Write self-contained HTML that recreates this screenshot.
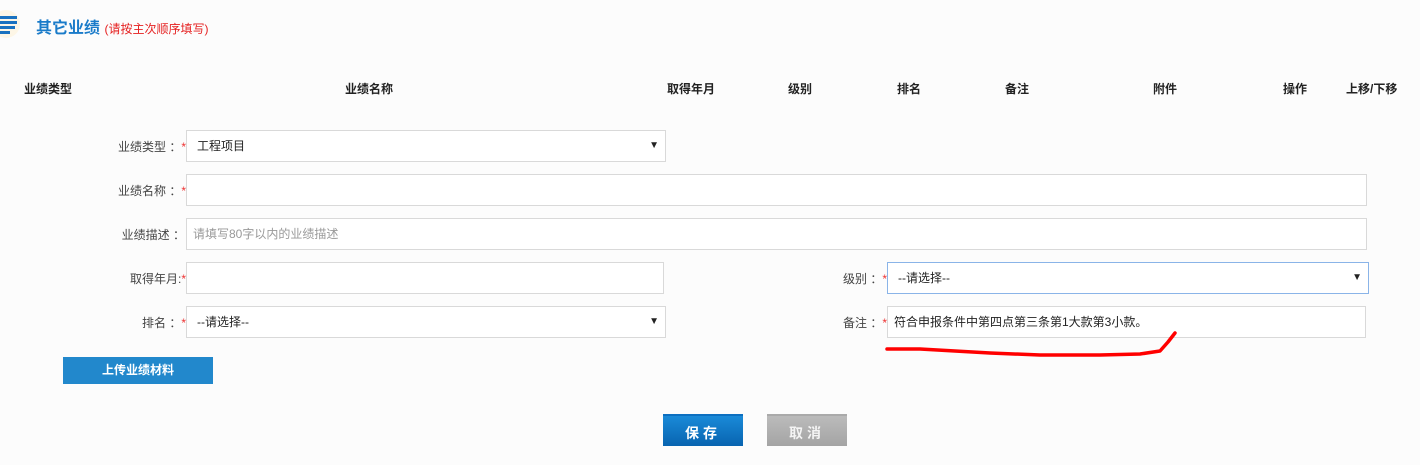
<!DOCTYPE html>
<html><head><meta charset="utf-8"><style>
body{margin:0;width:1420px;height:465px;background:#fcfcfc;font-family:"Liberation Sans","Noto Sans CJK SC",sans-serif;position:relative;overflow:hidden;font-size:12px;color:#333}
.a{position:absolute}
.th{position:absolute;top:80px;font-weight:bold;font-size:12px;color:#222}
.lb{position:absolute;width:180px;left:0;text-align:right;color:#444;font-size:12px}
.lb i{color:#e33;font-style:normal}
.in{position:absolute;background:#fff;border:1px solid #d9d9d9;box-sizing:border-box;height:32px;line-height:30px;padding-left:10px;font-size:12px;color:#222}
.in .ar{position:absolute;right:6px;top:0;font-size:10px}
.btn{position:absolute;color:#fff;text-align:center;font-weight:bold}
</style></head><body>
<svg class="a" style="left:0;top:5px" width="24" height="34"><circle cx="6" cy="19" r="14" fill="#fdf6e6"/><g fill="#1a72c0"><rect x="0" y="11" width="17" height="3"/><rect x="0" y="16" width="17" height="3"/><rect x="0" y="21" width="15" height="3"/><rect x="0" y="26" width="10" height="3"/></g></svg>
<div class="a" style="left:36px;top:14px;font-size:16px;font-weight:bold;color:#1a7bc9">其它业绩 <span style="font-size:12px;font-weight:normal;color:#e52020">(请按主次顺序填写)</span></div>
<div class="th" style="left:24px">业绩类型</div>
<div class="th" style="left:345px">业绩名称</div>
<div class="th" style="left:667px">取得年月</div>
<div class="th" style="left:788px">级别</div>
<div class="th" style="left:897px">排名</div>
<div class="th" style="left:1005px">备注</div>
<div class="th" style="left:1153px">附件</div>
<div class="th" style="left:1283px">操作</div>
<div class="th" style="left:1346px">上移/下移</div>

<div class="lb" style="top:138px;width:186px">业绩类型 ：<i>*</i></div>
<div class="in" style="left:186px;top:130px;width:480px">工程项目<span class="ar">▼</span></div>
<div class="lb" style="top:182px;width:186px">业绩名称 ：<i>*</i></div>
<div class="in" style="left:186px;top:174px;width:1181px"></div>
<div class="lb" style="top:226px;width:185px">业绩描述 ：</div>
<div class="in" style="left:186px;top:218px;width:1181px;color:#999;padding-left:6px">请填写80字以内的业绩描述</div>
<div class="lb" style="top:270px;width:186px">取得年月:<i>*</i></div>
<div class="in" style="left:186px;top:262px;width:478px"></div>
<div class="lb" style="top:314px;width:186px">排名 ：<i>*</i></div>
<div class="in" style="left:186px;top:306px;width:480px">--请选择--<span class="ar">▼</span></div>
<div class="lb" style="top:270px;left:700px;width:187px">级别 ：<i>*</i></div>
<div class="in" style="left:887px;top:262px;width:482px;border-color:#8ab4e8">--请选择--<span class="ar">▼</span></div>
<div class="lb" style="top:314px;left:700px;width:187px">备注 ：<i>*</i></div>
<div class="in" style="left:887px;top:306px;width:479px;padding-left:6px">符合申报条件中第四点第三条第1大款第3小款。</div>
<svg class="a" style="left:880px;top:328px" width="310" height="34"><path d="M7 21 L40 21 L75 23 L110 25 L160 27 L220 27 L260 26 L280 23 L288 14 L295 5" stroke="#f00" stroke-width="3.5" fill="none" stroke-linecap="round" stroke-linejoin="round"/></svg>

<div class="btn" style="left:63px;top:357px;width:150px;height:27px;line-height:27px;background:#2288cc;font-size:12px">上传业绩材料</div>
<div class="btn" style="left:663px;top:414px;width:80px;height:32px;line-height:34px;background:linear-gradient(#1a8ad8,#0864b0);border-top:2px solid #0c6fc0;box-sizing:border-box;font-size:14px;letter-spacing:4px">保存</div>
<div class="btn" style="left:767px;top:414px;width:80px;height:32px;line-height:34px;background:linear-gradient(#bbb,#a4a4a4);border-top:2px solid #aaa;box-sizing:border-box;font-size:14px;letter-spacing:4px;color:#f4f4f4">取消</div>
</body></html>
